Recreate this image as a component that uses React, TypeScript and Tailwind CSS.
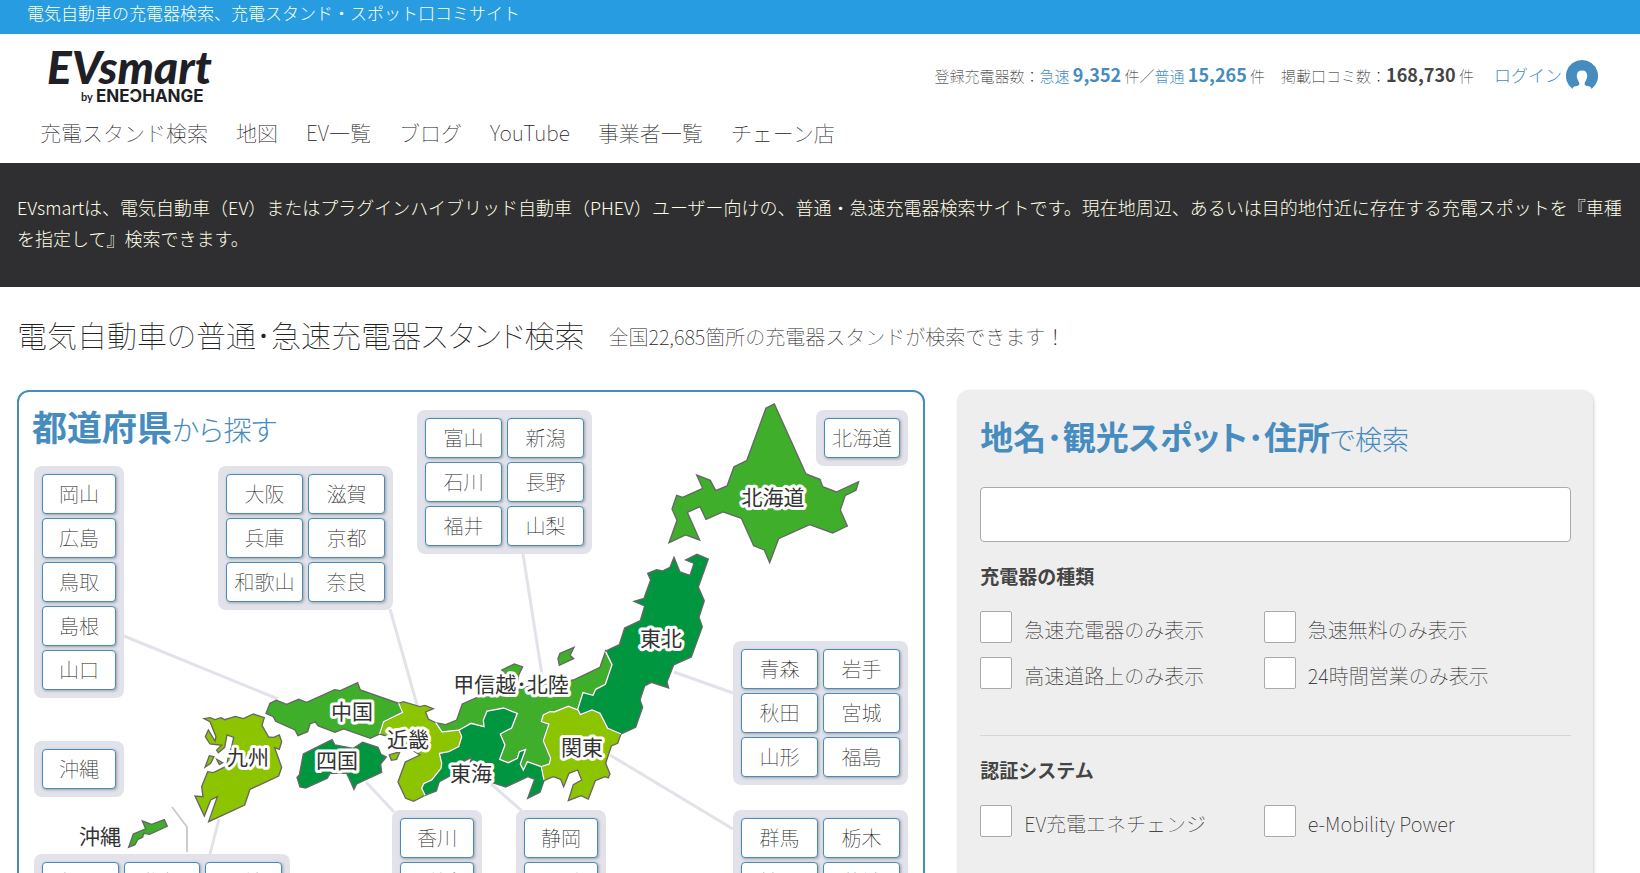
import { useState } from "react";

const navItems = ["充電スタンド検索", "地図", "EV一覧", "ブログ", "YouTube", "事業者一覧", "チェーン店"];

const prefectureGroups = [
  { id: "chugoku", className: "left-[15px] top-[74px] w-[90px] grid-cols-1", names: ["岡山", "広島", "鳥取", "島根", "山口"] },
  { id: "kinki", className: "left-[199px] top-[74px] w-[175px] grid-cols-2", names: ["大阪", "滋賀", "兵庫", "京都", "和歌山", "奈良"] },
  { id: "hokuriku", className: "left-[398px] top-[18px] w-[175px] grid-cols-2", names: ["富山", "新潟", "石川", "長野", "福井", "山梨"] },
  { id: "hokkaido", className: "left-[797px] top-[18px] w-[92px] grid-cols-1", names: ["北海道"] },
  { id: "tohoku", className: "left-[714px] top-[249px] w-[175px] grid-cols-2", names: ["青森", "岩手", "秋田", "宮城", "山形", "福島"] },
  { id: "okinawa", className: "left-[15px] top-[349px] w-[90px] grid-cols-1", names: ["沖縄"] },
  { id: "shikoku", className: "left-[373px] top-[418px] w-[90px] grid-cols-1", names: ["香川", "愛媛"] },
  { id: "tokai", className: "left-[497px] top-[418px] w-[90px] grid-cols-1", names: ["静岡", "三重"] },
  { id: "kanto", className: "left-[714px] top-[418px] w-[175px] grid-cols-2", names: ["群馬", "栃木", "埼玉", "茨城"] },
  { id: "kyushu", className: "left-[15px] top-[462px] w-[256px] grid-cols-3", names: ["福岡", "佐賀", "長崎"] },
];

const regionLabels = [
  { name: "北海道", x: 754, y: 106 },
  { name: "東北", x: 642, y: 247 },
  { name: "甲信越･北陸", x: 492, y: 293 },
  { name: "関東", x: 563, y: 356 },
  { name: "東海", x: 452, y: 382 },
  { name: "近畿", x: 389, y: 348 },
  { name: "中国", x: 333, y: 320 },
  { name: "四国", x: 318, y: 369 },
  { name: "九州", x: 229, y: 366 },
  { name: "沖縄", x: 81, y: 445 },
];

const filters = [
  {
    title: "充電器の種類",
    options: ["急速充電器のみ表示", "急速無料のみ表示", "高速道路上のみ表示", "24時間営業のみ表示"],
  },
  {
    title: "認証システム",
    options: ["EV充電エネチェンジ", "e-Mobility Power"],
  },
];

function Logo() {
  return (
    <svg width="180" height="60" viewBox="0 0 180 60" role="img" aria-label="EVsmart by ENECHANGE">
      <g fill="#1f1f27">
        <text x="-1" y="34" fontSize="46" fontWeight="900" fontStyle="italic" fontFamily="Lato, sans-serif">
          EVsmart
        </text>
        <text x="33" y="51" fontSize="11" fontWeight="700" fontFamily="Lato, sans-serif">
          by
        </text>
        <text x="48" y="52" fontSize="17" fontWeight="700" fontFamily="Inter, sans-serif">
          ENEƆHANGE
        </text>
      </g>
    </svg>
  );
}

function UserIcon() {
  return (
    <svg width="32" height="30" viewBox="0 0 32 30" aria-hidden="true">
      <path
        d="M16 0a16 16 0 0 0-9.500 28.900c.3-1.600 1.300-2.400 2.800-2.700 2.700-.5 3.900-1 4.100-2.300.1-1-.7-1.900-1.300-3.300-.9-2-1.300-3.300-1.300-4.800 0-3.400 1.900-5.300 5.200-5.300s5.200 1.900 5.200 5.300c0 1.500-.4 2.800-1.300 4.800-.6 1.400-1.400 2.300-1.300 3.300.2 1.300 1.400 1.800 4.100 2.300 1.500.3 2.500 1.100 2.800 2.700A16 16 0 0 0 16 0z"
        fill="#468cbf"
      />
    </svg>
  );
}

function JapanMap() {
  return (
    <svg className="absolute left-0 top-0" width="904" height="538" viewBox="0 0 904 538" aria-hidden="true">
      <g stroke="#e2e2ea" strokeWidth="3">
        <path d="M105 244L259 307M371 217L398 313M504 162L523 283M655 280L714 301M591 363L714 437M471 391L503 419M347 390L375 420M200 427L191 462" />
      </g>
      <path d="M153 415L168 435V460" fill="none" stroke="#ccc" strokeWidth="2" />

      <g stroke="#666" strokeWidth="4" strokeLinejoin="miter">
        <g transform="translate(621 -2) scale(.3333)">
          <path
            fill="#3fae2a"
            d="M378 54L403 42L498 252L540 268L548 290L589 306L656 275L648 301L616 316L601 360L622 408L578 429L509 404L416 446L389 518L373 480L341 467L304 385L249 366L198 388L180 350L142 367L179 450L137 435L87 458L111 391L96 357L110 316L128 322L188 295L170 255L211 271L227 302L261 288L282 230L320 212Z"
          />
        </g>

        <g transform="translate(421 228) scale(.3333)">
          <path
            fill="#00963f"
            d="M702-188L720-144L750-134L762-170L737-180L771-197L805-183L775-99L793-58L777-8L787 20L754 111L701 135L681 186L686 204L634 187L614 198L600 240L608 262L587 322L543 342L503 325L480 280L456 270L421 284L413 264L429 218L459 226L467 208L496 193L516 134L497 93L538 74L554 24L601 2L614-42L582-56L612-65L632-120L623-140L650-151L667-147L690-158Z"
          />
          <path fill="#3fae2a" d="M360 100L402 82L390 106L401 116L358 136L354 116Z" />
          <path fill="#3fae2a" d="M185 150L223 132L248 141L236 165L230 215L195 210L205 175Z" />
          <path
            fill="#3fae2a"
            d="M497 93L516 134L496 193L467 208L459 226L429 218L413 270L385 259L343 276L310 285L304 305L327 312L310 362L332 415L328 432L304 440L262 425L250 450L241 432L257 388L238 395L232 415L205 428L179 418L195 375L181 342L215 324L232 280L191 264L141 273L130 300L132 320L93 310L57 330L6 336L-13 308L17 314L50 300L67 252L110 233L230 210L262 200L400 180L480 142Z"
          />
          <path
            fill="#8cc400"
            d="M413 270L421 284L456 270L480 280L503 325L543 342L533 370L514 378L497 430L510 462L505 474L495 470L466 482L445 537L423 527L385 542L400 494L425 480L413 450L387 460L371 500L362 478L340 470L312 482L304 440L328 432L332 415L310 362L327 312L304 305L310 285L330 275L343 276L385 259Z"
          />
          <path
            fill="#00963f"
            d="M57 330L93 310L132 320L130 300L141 273L191 264L232 280L215 324L181 342L195 375L179 418L205 428L232 415L238 395L257 388L241 432L250 450L262 425L304 440L312 482L300 517L263 535L284 478L264 470L197 501L158 488L90 430L95 412L40 440L35 465L-2 485L-11 513L-45 526L-55 505L-48 490L-25 480L3 445L5 430L-2 400L26 395L56 380L65 350Z"
          />
        </g>

        <g transform="translate(161 248) scale(.3333)">
          <path
            fill="#8cc400"
            d="M656 190L670 185L720 200L735 196L760 206L737 216L745 237L767 248L786 276L837 270L845 290L836 320L806 335L778 340L785 370L783 385L755 420L732 430L725 445L735 466L701 484L677 475L654 426L676 366L720 345L680 320L625 290L599 282L611 245L668 217Z"
          />
          <path fill="#8cc400" d="M628 345L660 335L650 358L634 361Z" />
          <path
            fill="#3fae2a"
            d="M533 128L541 150L656 190L668 217L611 245L599 282L571 295L491 267L465 277L415 258L406 246L390 252L383 275L354 287L345 270L287 244L280 230L258 220L270 190L289 181L320 193L356 178L380 187L464 149L481 152Z"
          />
          <path
            fill="#00963f"
            d="M456 299L465 315L520 325L548 307L594 322L603 343L619 351L602 372L605 397L530 432L522 448L512 425L500 400L450 400L442 415L377 444L360 441L351 412L358 405L370 342Z"
          />
          <path
            fill="#8cc400"
            d="M72 236L90 233L105 239L123 233L134 239L166 229L190 236L220 222L253 233L246 256L266 291L281 292L298 285L305 305L298 328L284 323L305 382L296 408L210 448L194 495L86 545L112 470L92 480L73 528L45 468L69 470L65 440L83 395L100 398L140 378L145 350L155 320L161 292L141 285L134 322L115 338L110 330L125 316L90 312L76 290L85 270L105 303L108 290L90 245Z"
          />
          <path fill="#8cc400" d="M88 347L102 350L92 370L75 382Z" />
          <path fill="#8cc400" d="M110 358L128 368L118 374Z" />
        </g>

        <path
          fill="#3fae2a"
          transform="translate(-19 -12) scale(.3333)"
          d="M427 1323L455 1333L493 1319L502 1339L449 1363L431 1360L428 1372L414 1378L405 1394L386 1402L400 1362L437 1347Z"
        />
      </g>

      {/* borders between neighbouring regions */}
      <g fill="none" stroke="#fff" strokeWidth="4">
        <g transform="translate(421 228) scale(.3333)">
          <path d="M497 95L516 134L496 193L467 208L459 226L429 218L413 268L421 284L456 270L480 280L503 325L543 342" />
          <path d="M413 270L385 259L343 276L330 275L310 285L304 305L327 312L310 362L332 415L328 432L304 440L312 480" />
          <path d="M304 440L262 425L250 450L241 432L257 388L238 395L232 415L205 428L179 418L195 375L181 342L215 324L232 280L191 264L141 273L130 300L132 320L93 310L57 330" />
        </g>
        <g transform="translate(161 248) scale(.3333)">
          <path d="M767 248L786 276L837 270L845 290L836 320L806 335L778 340L785 370L783 385L755 420L732 430L725 445L735 466" />
          <path d="M656 190L668 217L611 245L599 282" />
        </g>
      </g>

      <g
        fill="#333"
        stroke="#fff"
        strokeWidth="6"
        strokeLinejoin="round"
        paintOrder="stroke"
        fontSize="21"
        fontWeight="400"
        textAnchor="middle"
      >
        {regionLabels.map((r) => (
          <text key={r.name} x={r.x} y={r.y + 7}>
            {r.name}
          </text>
        ))}
      </g>
    </svg>
  );
}

export default function App() {
  const [keyword, setKeyword] = useState("");

  return (
    <div className="bg-white font-thin text-[#222] [font-family:'Noto_Sans_CJK_JP',sans-serif]">
      <p className="h-[34px] bg-[#279ce1] pl-[27px] text-[17px] font-light leading-[25px] text-white">
        電気自動車の充電器検索、充電スタンド・スポット口コミサイト
      </p>

      <header className="pb-[15px]">
        <div className="flex items-start justify-between pl-12 pr-[42px] pt-4">
          <a href="#">
            <Logo />
          </a>
          <div className="flex items-center gap-5 pt-2 text-[15px] leading-8">
            <p>
              登録充電器数：
              <span className="font-light text-[#468cbf]">急速 </span>
              <b className="text-lg font-bold leading-8 text-[#468cbf]">9,352</b> 件／
              <span className="font-light text-[#468cbf]">普通 </span>
              <b className="text-lg font-bold leading-8 text-[#468cbf]">15,265</b> 件
              <span className="ml-4">掲載口コミ数：</span>
              <b className="text-lg font-bold leading-8 text-[#444]">168,730</b> 件
            </p>
            <a href="#" className="flex items-center gap-1 text-[17px] font-light text-[#468cbf]">
              ログイン
              <UserIcon />
            </a>
          </div>
        </div>
        <nav className="mt-[6px] flex gap-7 pl-10 text-[21px] leading-8">
          {navItems.map((item) => (
            <a key={item} href="#">
              {item}
            </a>
          ))}
        </nav>
      </header>

      <div className="bg-[#2f2f31] px-[17px] pb-[33px] pt-[29px] text-lg font-light leading-[31px] text-[#ffffe8]">
        EVsmartは、電気自動車（EV）またはプラグインハイブリッド自動車（PHEV）ユーザー向けの、普通・急速充電器検索サイトです。現在地周辺、あるいは目的地付近に存在する充電スポットを『車種を指定して』検索できます。
      </div>

      <main className="pb-10 pl-[17px] pr-[47px]">
        <div className="flex items-center gap-6 pb-[33px] pt-[25px]">
          <h1 className="text-[30px] leading-[45px] [font-feature-settings:'palt']">電気自動車の普通･急速充電器スタンド検索</h1>
          <p className="pt-1 text-[20px]">全国22,685箇所の充電器スタンドが検索できます！</p>
        </div>

        <div className="grid grid-cols-[10fr_7fr] gap-8">
          <section className="rounded-xl border-2 border-[#468cbf]">
            <div className="relative h-[538px] w-[904px]">
              <JapanMap />
              <h2 className="relative pl-[13px] pt-2 text-[28px] font-light leading-[52px] text-[#468cbf] [font-feature-settings:'palt']">
                <b className="text-[35px] font-bold">都道府県</b>から探す
              </h2>
              {prefectureGroups.map((group) => (
                <div
                  key={group.id}
                  className={`absolute grid gap-x-[5px] gap-y-1 rounded-lg bg-[#e2e2ea] p-2 ${group.className}`}
                >
                  {group.names.map((name) => (
                    <a
                      key={name}
                      href="#"
                      className="block h-10 whitespace-nowrap rounded border border-[#468cbf] bg-white text-center text-[20px] leading-[38px] shadow-[1px_1px_3px_rgba(0,0,0,0.3)]"
                    >
                      {name}
                    </a>
                  ))}
                </div>
              ))}
            </div>
          </section>

          <form className="rounded-xl bg-[#eee] pl-[23px] pr-[22px] pt-5 shadow-[1px_1px_3px_rgba(0,0,0,0.2)]">
            <h2 className="text-[27px] font-light leading-[52px] text-[#468cbf] [font-feature-settings:'palt']">
              <label htmlFor="keyword">
                <b className="text-[33px] font-bold">地名･観光スポット･住所</b>で検索
              </label>
            </h2>
            <input
              id="keyword"
              type="text"
              value={keyword}
              onChange={(e) => setKeyword(e.target.value)}
              className="mt-[22px] block h-[55px] w-full rounded border border-[#aaa] bg-white px-3 text-xl"
            />
            {filters.map((filter) => (
              <fieldset key={filter.title} className="border-b border-[#d5d5d5] pb-[46px] last:border-b-0">
                <legend className="pt-[18px] text-[19px] font-bold leading-8 text-[#444]">{filter.title}</legend>
                <div className="mt-[19px] grid grid-cols-[12fr_13fr] gap-y-[14px]">
                  {filter.options.map((option) => (
                    <label key={option} className="flex items-center gap-3 text-[20px] leading-[26px]">
                      <input
                        type="checkbox"
                        className="size-8 appearance-none rounded-xs border border-[#aaa] bg-white"
                      />
                      <span className="pt-[6px]">{option}</span>
                    </label>
                  ))}
                </div>
              </fieldset>
            ))}
          </form>
        </div>
      </main>
    </div>
  );
}
